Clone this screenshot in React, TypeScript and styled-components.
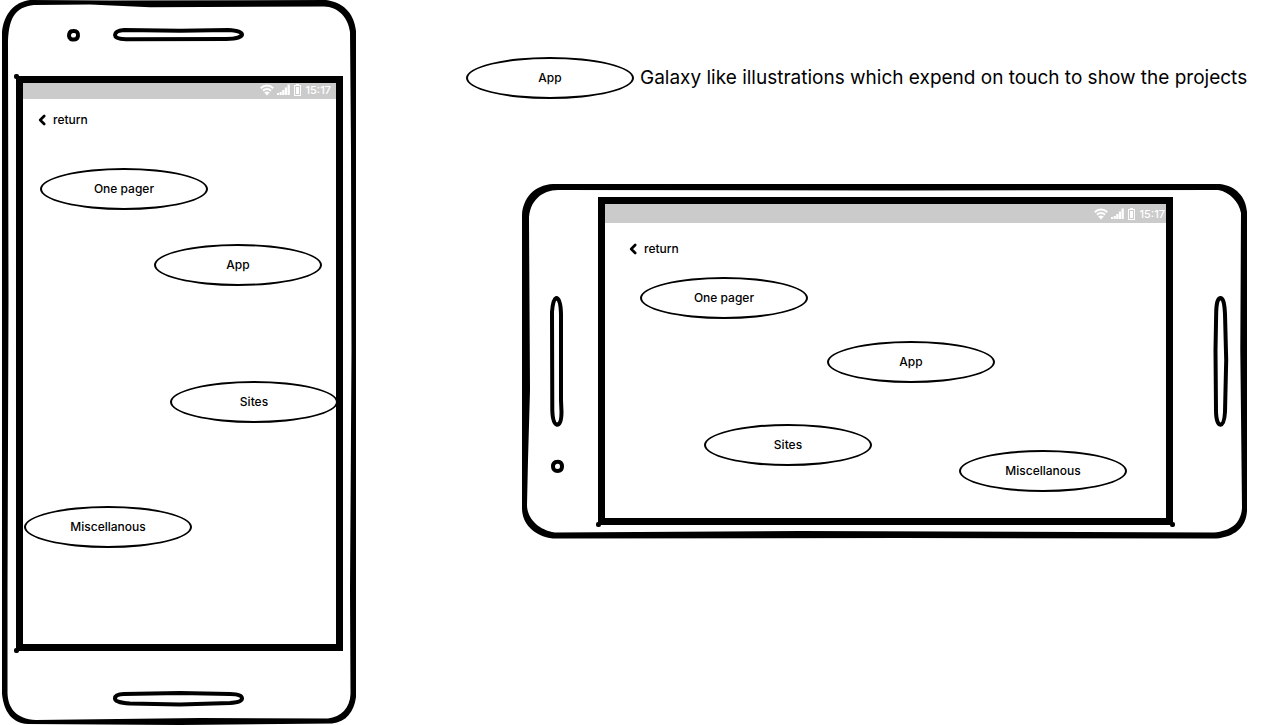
import React from "react";
import styled, { createGlobalStyle } from "styled-components";

const GlobalStyle = createGlobalStyle`
  *, *::before, *::after { box-sizing: border-box; }
  body {
    margin: 0;
    background: #fff;
    color: #000;
    font-family: Inter, "Liberation Sans", sans-serif;
  }
`;

const Page = styled.main`
  display: flex;
  align-items: flex-start;
`;

const Notes = styled.div`
  flex: 1;
  min-width: 0;
  display: flex;
  flex-direction: column;
  gap: 84px;
  padding: 57px 16px 0 108px;
`;

const Legend = styled.section`
  display: flex;
  align-items: center;
  gap: 6px;
`;

const LegendText = styled.p`
  margin: 0;
  font-size: 19px;
  line-height: 24px;
  white-space: nowrap;
`;

const Bubble = styled.button`
  flex: none;
  width: 168px;
  height: 42px;
  padding: 0;
  border: 2px solid #000;
  border-radius: 50%;
  background: #fff;
  color: #000;
  font: inherit;
  font-size: 12px;
  font-weight: 500;
  line-height: 16px;
  cursor: pointer;
`;

const Device = styled.section<{ $landscape?: boolean }>`
  position: relative;
  display: flex;
  flex: none;
  ${(p) =>
    p.$landscape
      ? "height: 356px; margin-left: 56px; padding: 14px 74px 14px 76px;"
      : "width: 358px; height: 725px; padding: 76px 15px 74px 16px;"}
`;

const Outline = styled.svg`
  position: absolute;
  inset: 0;
  width: 100%;
  height: 100%;
`;

const Nub = styled.i<{ $x: "left" | "right"; $y: "top" | "bottom" }>`
  position: absolute;
  ${(p) => p.$x}: -9px;
  ${(p) => p.$y}: -9px;
  width: 5px;
  height: 5px;
  border-radius: 2px;
  background: #000;
`;

const Screen = styled.div`
  position: relative;
  flex: 1;
  min-width: 0;
  display: flex;
  flex-direction: column;
  border: 7px solid #000;
  background: #fff;
`;

const StatusBar = styled.div<{ $landscape?: boolean }>`
  display: flex;
  align-items: center;
  justify-content: flex-end;
  gap: 3px;
  height: ${(p) => (p.$landscape ? 19 : 16)}px;
  padding: ${(p) => (p.$landscape ? "0 1px 0 0" : "0 5px 2px 0")};
  background: #cbcbcb;
  color: #fff;
  font-size: 11px;
  font-weight: 500;
  line-height: 14px;
`;

const ReturnLink = styled.a<{ $landscape?: boolean }>`
  display: flex;
  align-items: center;
  align-self: flex-start;
  gap: 7px;
  margin: ${(p) => (p.$landscape ? "18px 0 0 24px" : "13px 0 0 15px")};
  color: #000;
  font-size: 12px;
  font-weight: 500;
  line-height: 16px;
  text-decoration: none;
`;

const Galaxy = styled.ul`
  position: relative;
  flex: 1;
  margin: 0;
  padding: 0;
  list-style: none;
`;

const Star = styled.li<{ $x: number; $y: number }>`
  position: absolute;
  display: flex;
  left: ${(p) => p.$x}px;
  top: ${(p) => p.$y}px;
`;

const WifiIcon = () => (
  <svg width="14" height="12" viewBox="0 0 14 12" aria-hidden="true">
    <g fill="none" stroke="#fff" strokeWidth="2">
      <path d="M.8 4.200C4.200.6 9.800.6 13.200 4.200" />
      <path d="M3 6.800c2.300-2.400 5.700-2.400 8 0" />
    </g>
    <path fill="#fff" d="M4.200 8.600C5.700 7.200 8.300 7.200 9.800 8.600L7 11.400z" />
  </svg>
);

const SignalIcon = () => (
  <svg width="13" height="12" viewBox="0 0 13 12" aria-hidden="true">
    <path
      fill="#fff"
      d="M0 9h2v2H0zM2.600 8h2.200v3H2.600zM5.200 6h2.200v5H5.200zM7.800 3.500H10V11H7.800zM10.500.5h2.300V11h-2.300z"
    />
  </svg>
);

const BatteryIcon = () => (
  <svg width="9" height="12" viewBox="0 0 9 12" aria-hidden="true">
    <path fill="#fff" fillRule="evenodd" d="M3 0h3v1h2v11H1V1h2zM2 2v9h5V2z" />
    <path fill="#fff" d="M3 3h3v7H3z" />
  </svg>
);

const Chevron = () => (
  <svg width="8" height="12" viewBox="0 0 8 12" aria-hidden="true">
    <path
      d="M6.200 2L2.200 6l4 4"
      fill="none"
      stroke="#000"
      strokeWidth="2.600"
      strokeLinecap="round"
      strokeLinejoin="round"
    />
  </svg>
);

const PortraitOutline = () => (
  <Outline viewBox="0 0 358 725" preserveAspectRatio="none" aria-hidden="true">
    <path
      fillRule="evenodd"
      d="M2 32C4 14 14 2 30 0L110 .5L326 0C342 2 354 12 356 31L356 697C354 712 346 722 332 723.500L180 725L28 724C12 723 4 712 2 694Z
         M8 46C8 18 15 7 34 5L90 4.500L150 7.200L324 6.500C338 7 348 17 350 32L351 150L351.500 350L350 590L350.500 694C350 708 341 717 328 718.500L200 718L36 720C16 719 8 708 7.500 693L7.500 590L8.500 300Z"
    />
    <g fill="none" stroke="#000" strokeWidth="4">
      <path d="M73 31C77 30.500 78.500 33 78 36C77.500 39 75.500 39.800 72.500 39.500C69.500 39 68.500 36.500 69.200 34C69.800 31.800 71 31 73 31Z" />
      <path d="M124 30L180 30.800L228 30C238 30.500 242 32.500 242 34.500C242 37 236 38.800 226 39L126 39.200C118 39 115 37.500 115 35C115 32.500 118 30.500 124 30Z" />
      <path d="M124 694L180 693L230 694C240 694 242 696.500 242 698.500C242 701 238 702.500 230 703L180 704.500L130 703.500C119 703 115 701 115 698.500C115 695.500 118 694 124 694Z" />
    </g>
  </Outline>
);

const LandscapeOutline = () => (
  <Outline viewBox="522 183 725 356" preserveAspectRatio="none" aria-hidden="true">
    <path
      fillRule="evenodd"
      d="M522 215C523 198 534 185 553 184L1220 184C1236 186 1246 197 1247 212L1247 350L1247 511C1246 528 1234 537 1216 538.500L900 538L553 538.500C534 536 522 524 522 508Z
         M529 220C529 201 542 190 558 190L900 190.500L1218 190C1230 192 1239 202 1241 213L1240.300 350L1242 508C1241 524 1230 531 1214 532.500L800 531L555 532.500C538 530 527 518 527 505L528 460L530 390Z"
    />
    <g fill="none" stroke="#000" strokeWidth="4">
      <path d="M557.500 461.800C560.500 461.500 562 463.500 562 466.500C562 469.500 560.500 471 557.500 471C554.500 471 553 469 553 466.500C553 464 554.500 462 557.500 461.800Z" />
      <path d="M556.500 298C559.500 299 560.800 305 561 314L561 400L561.500 412C561.500 420 560 424.500 557 424.800C554 424 552.500 418 552.300 410L552 312C552.500 304 553.500 299 556.500 298Z" />
      <path d="M1220.500 298C1223.500 298.500 1224.500 304 1225 314L1226.200 360L1225 412C1224.500 420 1223 424.500 1220.500 424.800C1218 424.500 1216 420 1216 410L1215.500 350L1216.200 312C1216.500 303 1217.500 298.500 1220.500 298Z" />
    </g>
  </Outline>
);

type Project = { name: string; x: number; y: number };

const portraitProjects: Project[] = [
  { name: "One pager", x: 17, y: 40 },
  { name: "App", x: 131, y: 116 },
  { name: "Sites", x: 147, y: 253 },
  { name: "Miscellanous", x: 1, y: 378 },
];

const landscapeProjects: Project[] = [
  { name: "One pager", x: 35, y: 20 },
  { name: "App", x: 222, y: 84 },
  { name: "Sites", x: 99, y: 167 },
  { name: "Miscellanous", x: 354, y: 193 },
];

function Phone({ landscape, projects }: { landscape?: boolean; projects: Project[] }) {
  return (
    <Device $landscape={landscape}>
      {landscape ? <LandscapeOutline /> : <PortraitOutline />}
      <Screen>
        {!landscape && <Nub $x="left" $y="top" />}
        <Nub $x="left" $y="bottom" />
        {landscape && <Nub $x="right" $y="bottom" />}
        <StatusBar $landscape={landscape}>
          <WifiIcon />
          <SignalIcon />
          <BatteryIcon />
          <time>15:17</time>
        </StatusBar>
        <ReturnLink href="#" $landscape={landscape}>
          <Chevron />
          return
        </ReturnLink>
        <Galaxy>
          {projects.map((p) => (
            <Star key={p.name} $x={p.x} $y={p.y}>
              <Bubble type="button">{p.name}</Bubble>
            </Star>
          ))}
        </Galaxy>
      </Screen>
    </Device>
  );
}

export default function App() {
  return (
    <>
      <GlobalStyle />
      <Page>
        <Phone projects={portraitProjects} />
        <Notes>
          <Legend>
            <Bubble type="button">App</Bubble>
            <LegendText>
              Galaxy like illustrations which expend on touch to show the projects
            </LegendText>
          </Legend>
          <Phone landscape projects={landscapeProjects} />
        </Notes>
      </Page>
    </>
  );
}
